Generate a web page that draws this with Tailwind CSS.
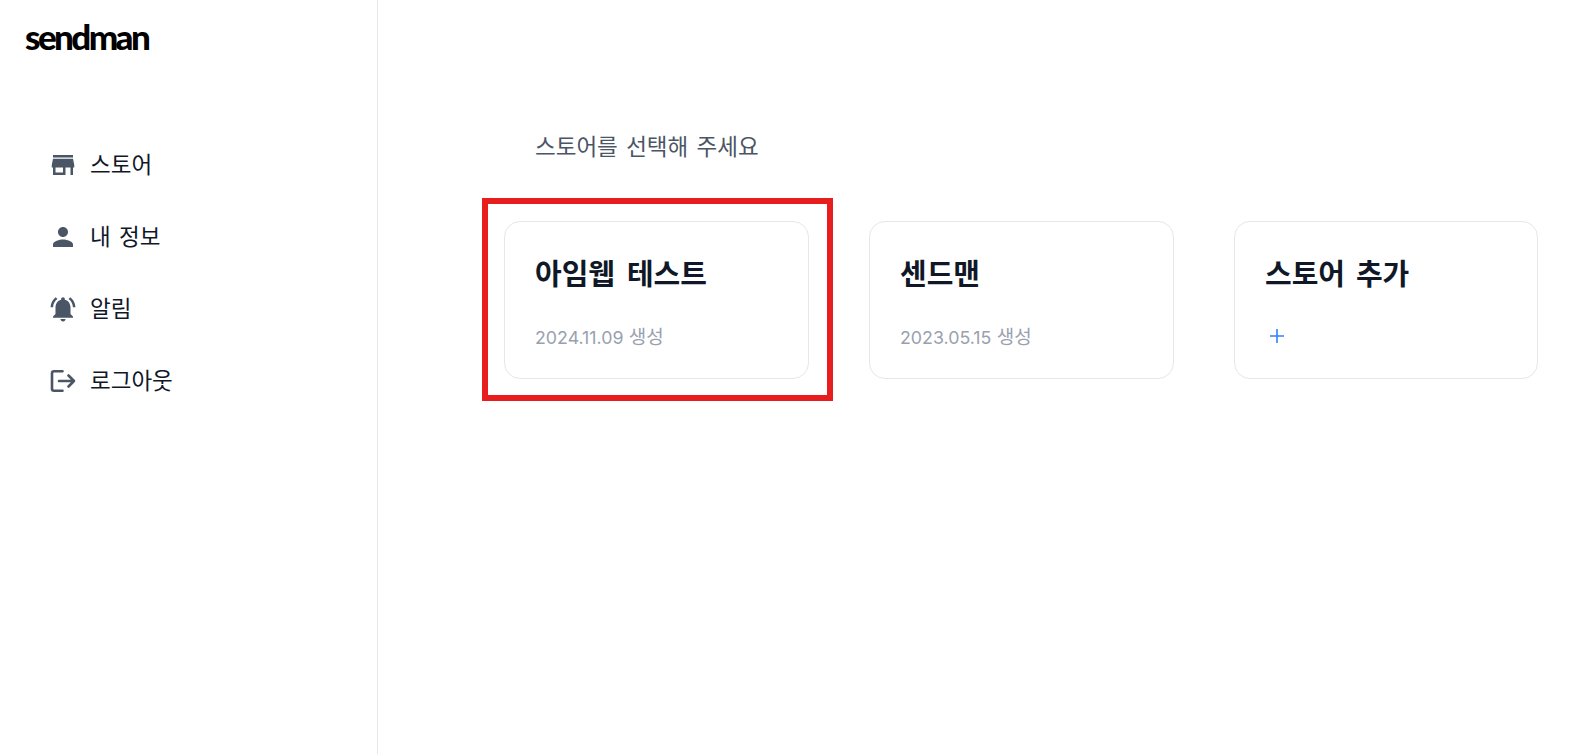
<!DOCTYPE html>
<html lang="ko">
<head>
  <meta charset="UTF-8" />
  <title>sendman</title>
  <script src="https://cdn.jsdelivr.net/npm/@tailwindcss/browser@4"></script>
</head>
<body class="h-[754px] overflow-hidden bg-white font-['Inter','Noto_Sans_CJK_KR',sans-serif]">
  <div class="flex h-full">
    <!-- sidebar -->
    <aside class="w-[378px] h-full shrink-0 border-r border-gray-200 pl-[25px]">
      <div class="pt-[16px] h-[145px] text-[35px] leading-[40px] font-black tracking-[-2.6px] text-black font-['Lato',sans-serif]">sendman</div>
      <nav class="flex flex-col gap-[32px] pl-[23px] text-[22.5px] leading-[40px] text-gray-900 [word-spacing:2px]">
        <a class="flex items-center gap-[12px]">
          <svg class="w-[30px] h-[30px] text-gray-600" viewBox="0 0 24 24" fill="currentColor"><path d="M20 4H4v2h16V4zm1 10v-2l-1-5H4l-1 5v2h1v6h10v-6h4v6h2v-6h1zm-9 4H6v-4h6v4z"/></svg>
          <span>스토어</span>
        </a>
        <a class="flex items-center gap-[12px]">
          <svg class="w-[30px] h-[30px] text-gray-600" viewBox="0 0 24 24" fill="currentColor"><path d="M12 12c2.21 0 4-1.79 4-4s-1.79-4-4-4-4 1.79-4 4 1.79 4 4 4zm0 2c-2.67 0-8 1.34-8 4v2h16v-2c0-2.66-5.33-4-8-4z"/></svg>
          <span>내 정보</span>
        </a>
        <a class="flex items-center gap-[12px]">
          <svg class="w-[30px] h-[30px] text-gray-600" viewBox="0 0 24 24" fill="currentColor"><path d="M7.58 4.08L6.15 2.65C3.75 4.48 2.17 7.3 2.03 10.5h2c.15-2.65 1.51-4.97 3.55-6.42zm12.39 6.42h2c-.15-3.2-1.73-6.02-4.12-7.85l-1.42 1.43c2.02 1.45 3.39 3.77 3.54 6.42zM18 11c0-3.07-1.64-5.64-4.5-6.32V4c0-.83-.67-1.5-1.5-1.5s-1.5.67-1.5 1.5v.68C7.63 5.36 6 7.92 6 11v5l-2 2v1h16v-1l-2-2v-5zm-6 11c.14 0 .27-.01.4-.04.65-.14 1.18-.58 1.44-1.18.1-.24.15-.5.15-.78h-4c.01 1.1.9 2 2.01 2z"/></svg>
          <span>알림</span>
        </a>
        <a class="flex items-center gap-[12px]">
          <svg class="w-[30px] h-[30px] text-gray-600" viewBox="0 0 30 30" fill="none" stroke="currentColor" stroke-width="2.600" stroke-linecap="round" stroke-linejoin="round"><path d="M14.500 5.300H6a2 2 0 0 0-2 2v15.400a2 2 0 0 0 2 2h8.500"/><path d="M11 15h15M20.500 9.500L26 15l-5.500 5.500"/></svg>
          <span>로그아웃</span>
        </a>
      </nav>
    </aside>

    <!-- main -->
    <main class="flex-1 pl-[126px] pt-[129px]">
      <h2 class="pl-[31px] text-[22.5px] leading-[36px] font-normal text-gray-600 [word-spacing:2px]">스토어를 선택해 주세요</h2>
      <div class="flex gap-[60px] mt-[56px]">
        <div class="relative">
          <div class="w-[305px] h-[158px] rounded-2xl border border-gray-200 pl-[30px] pt-[32px] pb-[27px] flex flex-col justify-between">
            <h3 class="text-[29px] leading-[42px] font-bold text-gray-900 [word-spacing:5px]">아임웹 테스트</h3>
            <p class="text-[19px] leading-[26px] text-gray-400"><span class="text-[17.8px]">2024.11.09</span> 생성</p>
          </div>
          <div class="absolute -left-[22px] -top-[23px] w-[351px] h-[203px] border-[6px] border-[#e81e1e]"></div>
        </div>
        <div class="w-[305px] h-[158px] rounded-2xl border border-gray-200 pl-[30px] pt-[32px] pb-[27px] flex flex-col justify-between">
          <h3 class="text-[29px] leading-[42px] font-bold text-gray-900">센드맨</h3>
          <p class="text-[19px] leading-[26px] text-gray-400"><span class="text-[17.8px]">2023.05.15</span> 생성</p>
        </div>
        <div class="w-[304px] h-[158px] rounded-2xl border border-gray-200 pl-[30px] pt-[32px] pb-[30px] flex flex-col justify-between">
          <h3 class="text-[29px] leading-[42px] font-bold text-gray-900 [word-spacing:4px]">스토어 추가</h3>
          <svg class="w-[24px] h-[24px] text-blue-500" viewBox="0 0 24 24" fill="none" stroke="currentColor" stroke-width="1.600"><path d="M12 5v14M5 12h14"/></svg>
        </div>
      </div>
    </main>
  </div>
</body>
</html>
